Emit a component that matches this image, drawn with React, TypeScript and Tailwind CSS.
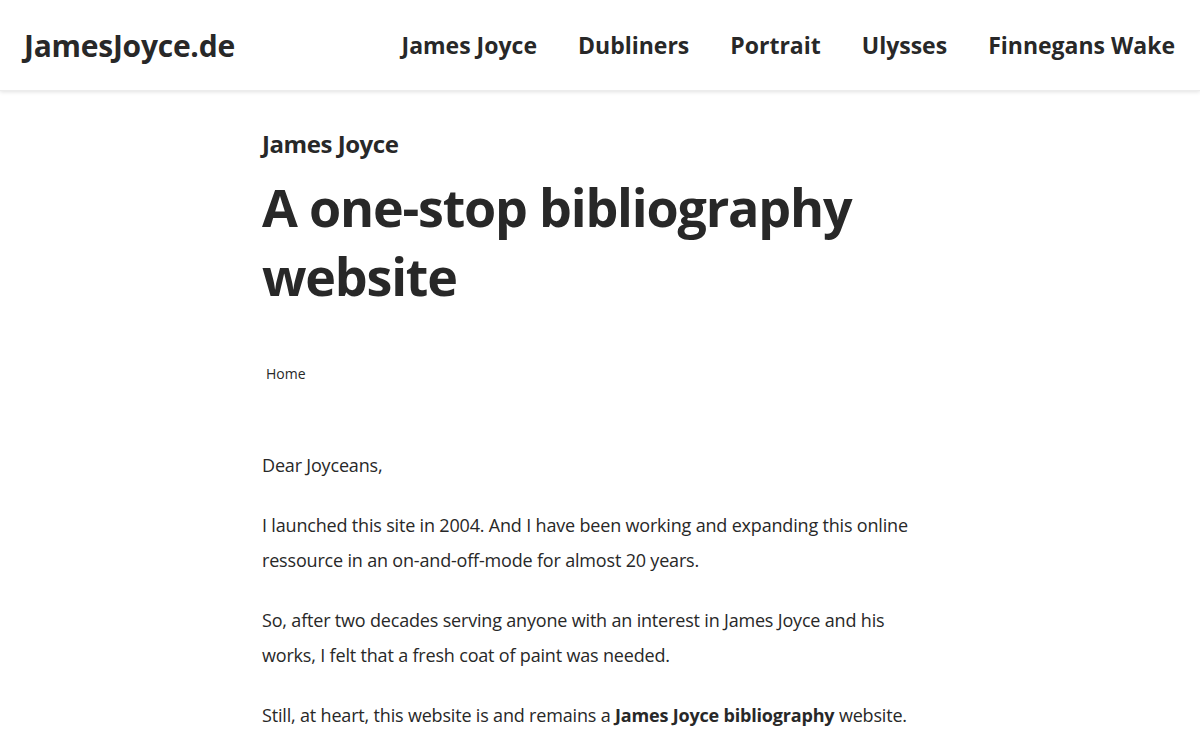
import React from "react";

export default function App() {
  const nav = ["James Joyce", "Dubliners", "Portrait", "Ulysses", "Finnegans Wake"];
  return (
    <div className="min-h-screen bg-white text-[#282828]" style={{ fontFamily: '"Open Sans", sans-serif' }}>
      <header className="h-[91px] flex items-center justify-between pl-[24px] pr-[25px] shadow-[0_1px_4px_rgba(0,0,0,0.12)] border-b border-[#ececec]">
        <div className="text-[30px] font-bold tracking-[-0.25px]">JamesJoyce.de</div>
        <nav className="flex items-center gap-[41px] text-[23px] font-bold">
          {nav.map((n) => (
            <span key={n}>{n}</span>
          ))}
        </nav>
      </header>
      <main className="w-[676px] mx-auto pt-[35px]">
        <h2 className="text-[24px] font-bold leading-[36px] tracking-[-0.45px]">James Joyce</h2>
        <h1 className="text-[52px] font-bold leading-[69px] mt-[10px] tracking-[-1.2px]">A one-stop bibliography website</h1>
        <div className="mt-[54px] pl-[4px] text-[14px] leading-[20px]">Home</div>
        <div className="mt-[64px] text-[18px] leading-[35px] tracking-[-0.18px]">
          <p>Dear Joyceans,</p>
          <p className="mt-[25px]">I launched this site in 2004. And I have been working and expanding this online ressource in an on-and-off-mode for almost 20 years.</p>
          <p className="mt-[25px]">So, after two decades serving anyone with an interest in James Joyce and his works, I felt that a fresh coat of paint was needed.</p>
          <p className="mt-[25px]">Still, at heart, this website is and remains a <strong className="font-bold">James Joyce bibliography</strong> website.</p>
        </div>
      </main>
    </div>
  );
}
